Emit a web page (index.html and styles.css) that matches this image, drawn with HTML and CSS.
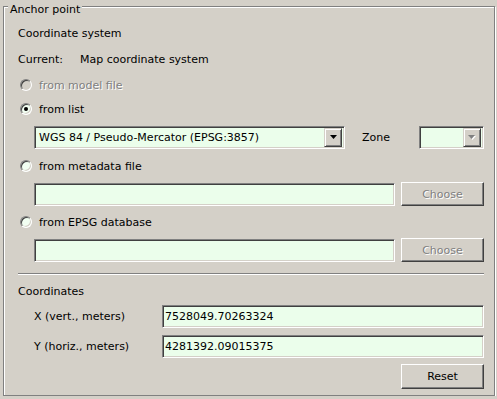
FILE: index.html
```html
<!DOCTYPE html>
<html lang="en">
<head>
    <meta charset="UTF-8">
    <title>Anchor point</title>
    <link rel="stylesheet" href="styles.css">
</head>
<body>
    <div class="group">
        <span class="group-title">Anchor point</span>

        <div class="row text-row first">Coordinate system</div>
        <div class="row text-row gap10">
            <span class="cur-label">Current:</span>
            <span>Map coordinate system</span>
        </div>

        <div class="row radio-row disabled gap10"><span class="radio"></span>from model file</div>
        <div class="row radio-row gap8"><span class="radio checked"></span>from list</div>

        <div class="row ctrl-row gap8">
            <div class="field combo combo-crs">
                <span class="combo-text">WGS 84 / Pseudo-Mercator (EPSG:3857)</span>
                <span class="combo-btn">
                    <svg width="7" height="4" viewBox="0 0 7 4"><polygon points="0,0 7,0 3.5,4" fill="#000"/></svg>
                </span>
            </div>
            <span class="zone-label">Zone</span>
            <div class="field combo combo-zone">
                <span class="combo-text"></span>
                <span class="combo-btn disabled">
                    <svg width="8" height="5" viewBox="0 0 8 5"><polygon points="1,1 8,1 4.5,5" fill="#fff"/><polygon points="0,0 7,0 3.5,4" fill="#808080"/></svg>
                </span>
            </div>
        </div>

        <div class="row radio-row gap9"><span class="radio"></span>from metadata file</div>
        <div class="row ctrl-row gap8">
            <div class="field path-input"></div>
            <button class="btn" disabled>Choose</button>
        </div>

        <div class="row radio-row gap8"><span class="radio"></span>from EPSG database</div>
        <div class="row ctrl-row gap8">
            <div class="field path-input"></div>
            <button class="btn" disabled>Choose</button>
        </div>

        <div class="separator"></div>

        <div class="row text-row gap8">Coordinates</div>
        <div class="row coord-row gap5">
            <span class="coord-label">X (vert., meters)</span>
            <div class="field coord-input">7528049.70263324</div>
        </div>
        <div class="row coord-row gap6">
            <span class="coord-label">Y (horiz., meters)</span>
            <div class="field coord-input">4281392.09015375</div>
        </div>
        <div class="row reset-row gap6">
            <button class="btn reset">Reset</button>
        </div>
    </div>
</body>
</html>
```

FILE: styles.css
```css
body {
    margin: 0;
    background: #d4d0c8;
    font-family: "DejaVu Sans", sans-serif;
    font-size: 11px;
    color: #000;
}
.group {
    position: relative;
    box-sizing: border-box;
    margin: 6px 0 0 3px;
    width: 492px;
    height: 390px;
    padding: 18px 10px 0 14px;
    border: 1px solid #808080;
    box-shadow: 1px 1px 0 #fff, inset 1px 1px 0 #fff;
    display: flex;
    flex-direction: column;
}
.group-title {
    position: absolute;
    top: -4px;
    left: 4px;
    padding: 0 2px;
    line-height: 13px;
    background: #d4d0c8;
}
.row {
    display: flex;
    align-items: center;
}
.gap5 { margin-top: 5px; }
.gap6 { margin-top: 6px; }
.gap8 { margin-top: 8px; }
.gap9 { margin-top: 9px; }
.gap10 { margin-top: 10px; }
.text-row, .radio-row {
    height: 16px;
}
.cur-label {
    width: 62px;
}
.radio {
    box-sizing: border-box;
    width: 12px;
    height: 12px;
    margin: 0 7px 0 2px;
    border-radius: 50%;
    border: 1px solid;
    border-color: #808080 #fff #fff #808080;
    box-shadow: inset 1px 1px 0 #404040, inset -1px -1px 0 #d4d0c8;
    background: #f2fff2;
    display: flex;
    align-items: center;
    justify-content: center;
}
.radio.checked::after {
    content: "";
    width: 4px;
    height: 4px;
    border-radius: 50%;
    background: #000;
}
.radio-row.disabled {
    color: #808080;
    text-shadow: 1px 1px 0 #fff;
}
.radio-row.disabled .radio {
    background: #d4d0c8;
}
.ctrl-row {
    height: 24px;
    padding-left: 16px;
}
.field {
    box-sizing: border-box;
    height: 23px;
    border: 1px solid;
    border-color: #808080 #fff #fff #808080;
    box-shadow: inset 1px 1px 0 #404040, inset -1px -1px 0 #d4d0c8;
    background: #ebfeeb;
    display: flex;
    align-items: center;
}
.combo {
    padding: 2px;
}
.combo-crs {
    width: 311px;
}
.combo-text {
    flex: 1;
    padding-left: 2px;
    white-space: nowrap;
}
.combo-btn {
    box-sizing: border-box;
    width: 18px;
    height: 19px;
    background: #d4d0c8;
    border: 1px solid;
    border-color: #d4d0c8 #404040 #404040 #d4d0c8;
    box-shadow: inset 1px 1px 0 #fff, inset -1px -1px 0 #808080;
    display: flex;
    align-items: center;
    justify-content: center;
}
.zone-label {
    margin-left: 17px;
    width: 57px;
}
.combo-zone {
    width: 65px;
}
.path-input {
    width: 361px;
    margin-right: 6px;
}
.btn {
    box-sizing: border-box;
    width: 83px;
    height: 24px;
    margin: 0;
    padding: 0;
    font-family: inherit;
    font-size: 11px;
    color: #000;
    background: #d4d0c8;
    border: 1px solid;
    border-color: #fff #404040 #404040 #fff;
    box-shadow: inset -1px -1px 0 #808080;
}
.btn:disabled {
    color: #808080;
    text-shadow: 1px 1px 0 #fff;
}
.separator {
    margin-top: 11px;
    height: 1px;
    border-top: 1px solid #808080;
    border-bottom: 1px solid #fff;
    height: 0;
}
.coord-row {
    height: 24px;
    padding-left: 16px;
}
.coord-label {
    width: 128px;
}
.coord-input {
    width: 322px;
    padding-left: 2px;
}
.reset-row {
    justify-content: flex-end;
}
.btn.reset {
    height: 25px;
}
```
